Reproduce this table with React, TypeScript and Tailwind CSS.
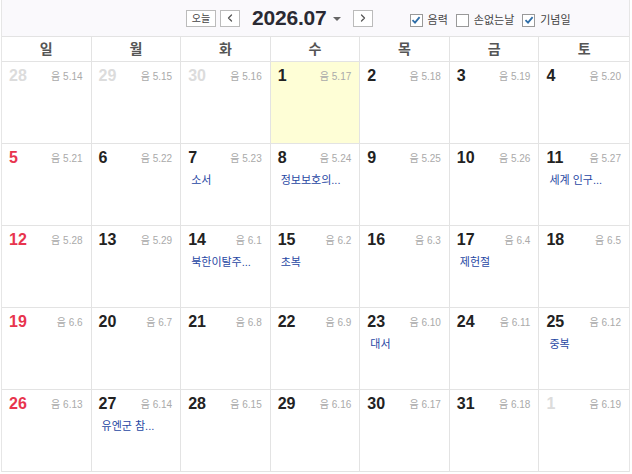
import { ChevronLeft, ChevronRight } from "lucide-react";

type Cell = { day: number; lunar: string; other?: boolean; event?: string; today?: boolean };

const weeks: Cell[][] = [
  [
    { day: 28, lunar: "5.14", other: true },
    { day: 29, lunar: "5.15", other: true },
    { day: 30, lunar: "5.16", other: true },
    { day: 1, lunar: "5.17", today: true },
    { day: 2, lunar: "5.18" },
    { day: 3, lunar: "5.19" },
    { day: 4, lunar: "5.20" },
  ],
  [
    { day: 5, lunar: "5.21" },
    { day: 6, lunar: "5.22" },
    { day: 7, lunar: "5.23", event: "소서" },
    { day: 8, lunar: "5.24", event: "정보보호의..." },
    { day: 9, lunar: "5.25" },
    { day: 10, lunar: "5.26" },
    { day: 11, lunar: "5.27", event: "세계 인구..." },
  ],
  [
    { day: 12, lunar: "5.28" },
    { day: 13, lunar: "5.29" },
    { day: 14, lunar: "6.1", event: "북한이탈주..." },
    { day: 15, lunar: "6.2", event: "초복" },
    { day: 16, lunar: "6.3" },
    { day: 17, lunar: "6.4", event: "제헌절" },
    { day: 18, lunar: "6.5" },
  ],
  [
    { day: 19, lunar: "6.6" },
    { day: 20, lunar: "6.7" },
    { day: 21, lunar: "6.8" },
    { day: 22, lunar: "6.9" },
    { day: 23, lunar: "6.10", event: "대서" },
    { day: 24, lunar: "6.11" },
    { day: 25, lunar: "6.12", event: "중복" },
  ],
  [
    { day: 26, lunar: "6.13" },
    { day: 27, lunar: "6.14", event: "유엔군 참..." },
    { day: 28, lunar: "6.15" },
    { day: 29, lunar: "6.16" },
    { day: 30, lunar: "6.17" },
    { day: 31, lunar: "6.18" },
    { day: 1, lunar: "6.19", other: true },
  ],
];

const dayNames = ["일", "월", "화", "수", "목", "금", "토"];

const Check = ({ checked, label }: { checked: boolean; label: string }) => (
  <label className="flex items-center gap-[5px] text-[11px] text-[#444]">
    <span className="flex h-[13px] w-[13px] items-center justify-center border border-[#999] bg-white">
      {checked && (
        <svg width="10" height="10" viewBox="0 0 10 10">
          <path d="M1.5 5.2 L4 7.6 L8.6 2.2" fill="none" stroke="#2f6ea8" strokeWidth="1.8" />
        </svg>
      )}
    </span>
    {label}
  </label>
);

export default function App() {
  return (
    <div
      className="h-[474px] w-[632px] bg-white pl-px"
      style={{ fontFamily: '"Liberation Sans", "Noto Sans CJK KR", sans-serif' }}
    >
      <div className="w-[629px] border-x border-[#e6e6e6]">
        {/* toolbar */}
        <div className="flex h-[36px] items-center bg-[#faf9fc]">
          <div className="ml-[184px] flex items-center">
            <button className="flex h-[17px] w-[30px] items-center justify-center border border-[#bbb] bg-white text-[10px] text-[#444]">
              오늘
            </button>
            <button className="ml-[4px] flex h-[17px] w-[20px] items-center justify-center border border-[#bbb] bg-white text-[#555]">
              <ChevronLeft size={12} strokeWidth={2.5} />
            </button>
            <span className="ml-[12px] text-[21px] font-bold tracking-[-0.2px] text-[#2a2a33]">2026.07</span>
            <span className="ml-[6px] mt-[2px] h-0 w-0 border-x-[4px] border-t-[4px] border-x-transparent border-t-[#666]" />
            <button className="ml-[12px] flex h-[17px] w-[20px] items-center justify-center border border-[#bbb] bg-white text-[#555]">
              <ChevronRight size={12} strokeWidth={2.5} />
            </button>
          </div>
          <div className="ml-[37px] mt-[4px] flex items-center gap-[8px]">
            <Check checked label="음력" />
            <Check checked={false} label="손없는날" />
            <Check checked label="기념일" />
          </div>
        </div>

        {/* day names */}
        <div className="grid grid-cols-7 border-y border-[#e3e3e3]">
          {dayNames.map((d, i) => (
            <div
              key={d}
              className={`flex h-[24px] items-center justify-center text-[14px] font-bold text-[#555] ${
                i < 6 ? "border-r border-[#e3e3e3]" : ""
              }`}
            >
              {d}
            </div>
          ))}
        </div>

        {/* weeks */}
        {weeks.map((w, wi) => (
          <div key={wi} className="grid grid-cols-7 border-b border-[#e3e3e3]">
            {w.map((c, i) => (
              <div
                key={i}
                className={`h-[81px] px-[7px] pt-[3px] ${i < 6 ? "border-r border-[#e3e3e3]" : ""} ${
                  c.today ? "bg-[#fefed6]" : ""
                }`}
              >
                <div className="flex items-center justify-between">
                  <span
                    className={`text-[16px] leading-[22px] font-bold ${
                      c.other ? "text-[#dcdcdc]" : i === 0 ? "text-[#e8344e]" : "text-[#222]"
                    }`}
                  >
                    {c.day}
                  </span>
                  <span className="mr-px text-[10px] text-[#aaa]">음 {c.lunar}</span>
                </div>
                {c.event && (
                  <div className="ml-[3px] mt-[4px] text-[11px] leading-[14px] text-[#2747a3]">{c.event}</div>
                )}
              </div>
            ))}
          </div>
        ))}
      </div>
    </div>
  );
}
